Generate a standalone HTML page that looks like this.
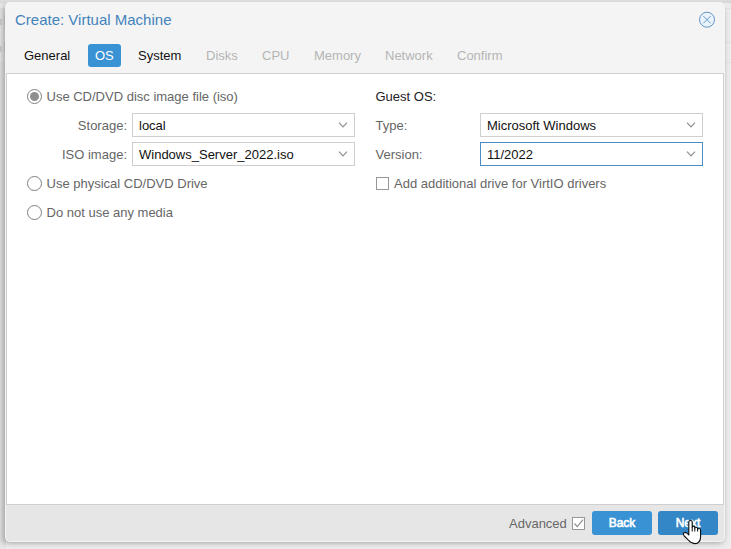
<!DOCTYPE html>
<html>
<head>
<meta charset="utf-8">
<title>Create: Virtual Machine</title>
<style>
html,body{margin:0;padding:0;}
body{width:731px;height:549px;overflow:hidden;position:relative;background:#dadada;font-family:"Liberation Sans",Arial,Helvetica,sans-serif;font-size:13px;line-height:15px;color:#666;}
.abs{position:absolute;white-space:nowrap;}
.bgl{position:absolute;left:0;top:0;width:6px;height:549px;-webkit-mask-image:linear-gradient(#000 0,#000 539px,transparent 549px);mask-image:linear-gradient(#000 0,#000 539px,transparent 549px);background:linear-gradient(90deg,rgba(0,0,0,0),rgba(0,0,0,.09)),linear-gradient(#e8e8e8 0,#e8e8e8 8px,#d4d4d4 8px,#e0e0e0 9px,#e0e0e0 62px,#d2d2d2 62px,#dadada 63px,#dadada 100%);}
.bgr{position:absolute;left:724px;top:0;width:7px;height:549px;background:#ececec;}
.bgb{position:absolute;left:0;top:540px;width:731px;height:9px;background:#ebebeb;}
.bgt{position:absolute;left:0;top:0;width:731px;height:3px;background:linear-gradient(#dedede,#d6d6d6);}
.hl{position:absolute;height:1px;background:#cfcfcf;}
#win{position:absolute;left:5px;top:2px;width:720px;height:540px;background:#f4f4f4;border-radius:5px;}
#shadow{position:absolute;left:5px;top:6px;width:720px;height:536px;border-radius:5px;box-shadow:-1px 1px 5px rgb(164,164,164);}
#title{left:15px;top:11px;font-size:15px;line-height:17px;color:#4383bd;}
.tab{position:absolute;top:44px;height:23px;line-height:23px;padding:0 7px;border-radius:3px;color:#111;font-size:13px;}
.tab.act{background:#3892d4;color:#fff;}
.tab.dis{color:#b4b4b4;}
#panel{position:absolute;left:6px;top:73px;width:716px;height:430px;background:#fff;border:1px solid #cfcfcf;}
#foot{position:absolute;left:6px;top:505px;width:718px;height:36px;background:#e6e6e6;border-radius:0 0 4px 4px;}
.radio{position:absolute;width:13px;height:13px;border:1px solid #7f7f7f;border-radius:50%;background:#fff;}
.radio.on::after{content:"";position:absolute;left:2px;top:2px;width:9px;height:9px;border-radius:50%;background:#8f8f8f;}
.inp{position:absolute;width:221px;height:22px;border:1px solid #cfcfcf;background:#fff;color:#111;}
.inp span{position:absolute;left:6px;top:4px;}
.inp svg{position:absolute;right:5px;top:7px;}
.inp.foc{border-color:#4a8cc6;}
.cb{position:absolute;width:11px;height:11px;border:1px solid #979797;background:#fff;}
.btn{position:absolute;top:511px;width:60px;height:24px;line-height:24px;border-radius:3px;background:#3892d4;color:#fff;text-align:center;font-size:12px;-webkit-text-stroke:0.6px #fff;}
</style>
</head>
<body>
<div class="bgb"></div><div class="bgr"></div><div class="bgl"></div><div class="bgt"></div>
<div class="hl" style="left:0;top:36px;width:6px;background:#d6d6d6"></div>
<div class="abs" style="left:3.5px;top:16px;width:1.5px;height:9px;background:#b5b5b5"></div>
<div class="abs" style="left:3.5px;top:43px;width:1.5px;height:9px;background:#b5b5b5"></div>
<div class="abs" style="left:0;top:19px;width:2px;height:6px;background:#c4c4c4"></div>
<div class="abs" style="left:0;top:46px;width:2px;height:6px;background:#c4c4c4"></div>
<div class="hl" style="left:724px;top:8px;width:7px;background:#e2e2e2"></div>
<div class="hl" style="left:724px;top:42px;width:7px;background:#e0e0e0"></div>
<div class="hl" style="left:724px;top:62px;width:7px;background:#e0e0e0"></div>

<div id="shadow"></div>
<div id="win"></div>
<div id="title" class="abs">Create: Virtual Machine</div>
<svg class="abs" style="left:697px;top:10px" width="20" height="20" viewBox="0 0 20 20"><circle cx="10" cy="9.7" r="7.5" fill="#e9f3fc" stroke="#6494c2" stroke-width="1"/><path d="M6.4 6.1 L13.6 13.3 M13.6 6.1 L6.4 13.3" stroke="#6494c2" stroke-width="0.95" fill="none"/></svg>

<div class="tab" style="left:17px">General</div>
<div class="tab act" style="left:88px">OS</div>
<div class="tab" style="left:131px">System</div>
<div class="tab dis" style="left:199px">Disks</div>
<div class="tab dis" style="left:255px">CPU</div>
<div class="tab dis" style="left:307px">Memory</div>
<div class="tab dis" style="left:378px">Network</div>
<div class="tab dis" style="left:450px">Confirm</div>

<div id="panel"></div>
<div id="foot"></div>

<div class="radio on" style="left:27px;top:89px"></div>
<div class="abs" style="left:46.5px;top:89px">Use CD/DVD disc image file (iso)</div>
<div class="abs" style="left:27px;width:100px;text-align:right;top:118px">Storage:</div>
<div class="inp" style="left:132px;top:113px"><span>local</span><svg width="12" height="8" viewBox="0 0 12 8"><path d="M2 1.6 L6 5.9 L10 1.6" stroke="#909090" stroke-width="1.2" fill="none"/></svg></div>
<div class="abs" style="left:27px;width:100px;text-align:right;top:147px">ISO image:</div>
<div class="inp" style="left:132px;top:142px"><span>Windows_Server_2022.iso</span><svg width="12" height="8" viewBox="0 0 12 8"><path d="M2 1.6 L6 5.9 L10 1.6" stroke="#909090" stroke-width="1.2" fill="none"/></svg></div>
<div class="radio" style="left:27px;top:176px"></div>
<div class="abs" style="left:46.5px;top:176px">Use physical CD/DVD Drive</div>
<div class="radio" style="left:27px;top:205px"></div>
<div class="abs" style="left:46.5px;top:205px">Do not use any media</div>

<div class="abs" style="left:375.5px;top:89px;color:#222">Guest OS:</div>
<div class="abs" style="left:375.5px;top:118px">Type:</div>
<div class="inp" style="left:480px;top:113px"><span>Microsoft Windows</span><svg width="12" height="8" viewBox="0 0 12 8"><path d="M2 1.6 L6 5.9 L10 1.6" stroke="#909090" stroke-width="1.2" fill="none"/></svg></div>
<div class="abs" style="left:375.5px;top:147px">Version:</div>
<div class="inp foc" style="left:480px;top:142px"><span>11/2022</span><svg width="12" height="8" viewBox="0 0 12 8"><path d="M2 1.6 L6 5.9 L10 1.6" stroke="#909090" stroke-width="1.2" fill="none"/></svg></div>
<div class="cb" style="left:376px;top:177px"></div>
<div class="abs" style="left:394px;top:176px">Add additional drive for VirtIO drivers</div>

<div class="abs" style="left:509px;top:516px">Advanced</div>
<div class="cb" style="left:572px;top:517px"><svg style="position:absolute;left:0;top:0" width="11" height="11" viewBox="0 0 11 11"><path d="M1.5 5.5 L4.3 8.6 L10 1.6" stroke="#8c8c8c" stroke-width="1.2" fill="none"/></svg></div>
<div class="btn" style="left:592px">Back</div>
<div class="btn" style="left:658px;background:#3487c6">Next</div>
<svg class="abs" style="left:675px;top:512px;overflow:visible" width="36" height="37" viewBox="675 512 36 37"><path d="M688.8 522 C688.8 520 692.2 520 692.2 522 L692.2 527.5 C692.3 525.6 694.7 525.6 694.8 527.6 L694.8 528.4 C695 526.6 697.5 526.8 697.6 528.8 L697.6 529.6 C697.9 528 700.5 528.2 700.6 530.2 L700.6 536.5 C700.6 541 698.2 543.6 694.8 543.6 C691.5 543.6 690 542 688.3 540 C686.8 538.3 685.5 537.3 684.2 535.8 C682.6 533.8 683.6 532 685.8 532.6 C687 533 688 534 688.8 535 Z" fill="#fff" stroke="#0a0a0a" stroke-width="1.1" stroke-linejoin="round"/><path d="M692.2 527.5 L692.2 531.5 M694.8 528.4 L694.8 531.5 M697.6 529.6 L697.6 531.5" stroke="#0a0a0a" stroke-width="1"/></svg>
</body>
</html>
